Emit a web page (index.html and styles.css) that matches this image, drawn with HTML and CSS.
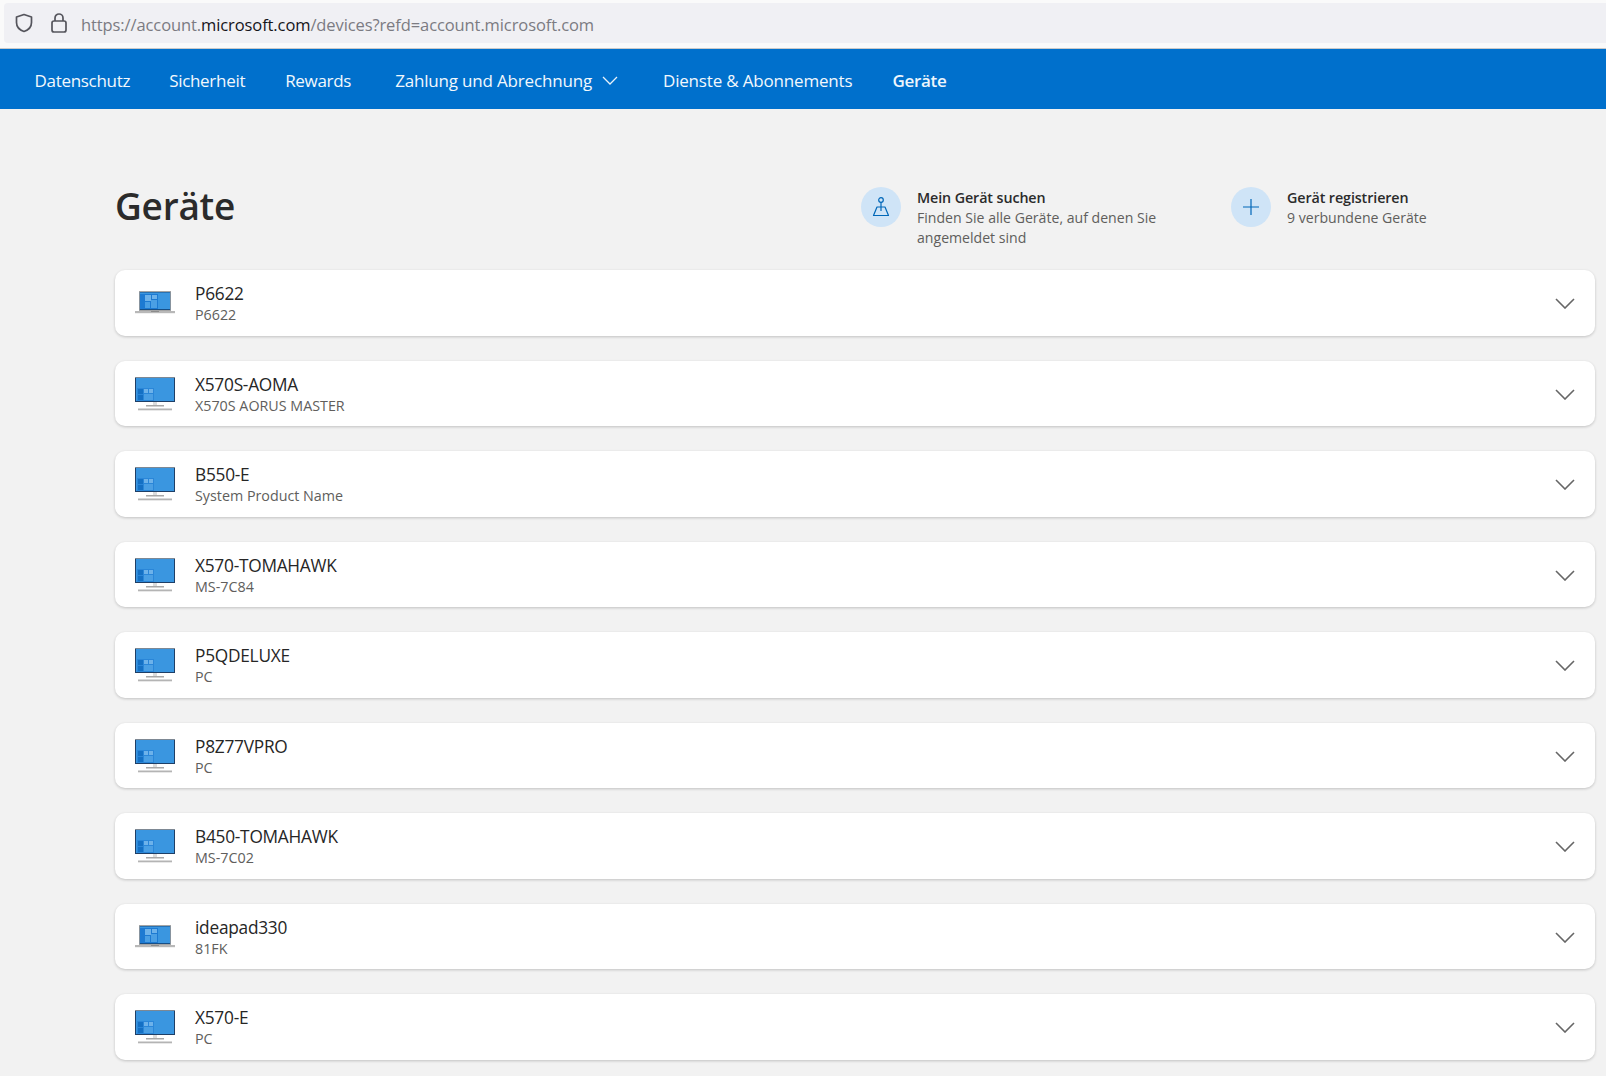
FILE: index.html
```html
<!DOCTYPE html>
<html lang="de">
<head>
<meta charset="utf-8">
<title>Geräte</title>
<link rel="stylesheet" href="styles.css">
</head>
<body>
<svg class="defs" width="0" height="0" aria-hidden="true">
  <defs>
    <symbol id="desktop" viewBox="0 0 40 34">
      <rect x="0" y="0" width="40" height="25" fill="#1f3f66"/>
      <rect x="0" y="0" width="40" height="1" fill="#7d8894"/>
      <rect x="1" y="1" width="38" height="23" fill="#3a96e0"/>
      <rect x="2" y="11" width="17" height="13" fill="#2a86d8"/>
      <rect x="3" y="12" width="5" height="5" fill="#1470c4"/><rect x="3" y="18" width="5" height="5" fill="#1470c4"/>
      <rect x="9" y="12" width="4" height="4" fill="#6db2ea"/><rect x="14" y="12" width="4" height="4" fill="#6db2ea"/>
      <rect x="9" y="17" width="9" height="6" fill="#4a9fe4"/>
      <rect x="18" y="25" width="4" height="3" fill="#dcdcdc"/>
      <rect x="11" y="28" width="18" height="1.500" fill="#a8a8a8"/>
      <rect x="3" y="31.500" width="34" height="1.800" fill="#b4b4b4"/>
    </symbol>
    <symbol id="laptop" viewBox="0 0 40 24">
      <rect x="4" y="0" width="32" height="20" fill="#a4a4a4"/>
      <rect x="4.800" y="1" width="30.400" height="18" fill="#174f86"/>
      <rect x="5" y="1.500" width="30" height="16.500" fill="#3a96e0"/>
      <rect x="5" y="3" width="18" height="15" fill="#1d7ad2"/>
      <rect x="10" y="4" width="6" height="6" fill="#6db2ea"/><rect x="17" y="4" width="5" height="4" fill="#6db2ea"/>
      <rect x="10" y="11" width="5" height="6" fill="#4a9fe4"/><rect x="16" y="9" width="6" height="8" fill="#4a9fe4"/>
      <rect x="0" y="20" width="40" height="2.200" fill="#b8b8b8"/>
      <rect x="16" y="20" width="8" height="1" fill="#8c8c8c"/>
    </symbol>
    <symbol id="chev" viewBox="0 0 20 11">
      <path d="M1 1 L10 10 L19 1" fill="none" stroke="#666" stroke-width="1.600"/>
    </symbol>
  </defs>
</svg>

<div class="browser">
  <div class="urlbar">
    <svg class="shield" width="18" height="20" viewBox="0 0 18 20"><path d="M9 1.500 L16.500 4 V9.500 C16.500 14 13.500 17 9 18.500 C4.500 17 1.500 14 1.500 9.500 V4 Z" fill="none" stroke="#55555c" stroke-width="1.700" stroke-linejoin="round"/></svg>
    <svg class="lock" width="16" height="20" viewBox="0 0 16 20"><rect x="1" y="8" width="14" height="11" rx="2" fill="none" stroke="#55555c" stroke-width="1.700"/><path d="M4 8 V5 A4 4 0 0 1 12 5 V8" fill="none" stroke="#55555c" stroke-width="1.700"/></svg>
    <span class="url">https://account.<b>microsoft.com</b>/devices?refd=account.microsoft.com</span>
  </div>
</div>

<nav class="nav">
  <a class="nav-item">Datenschutz</a>
  <a class="nav-item">Sicherheit</a>
  <a class="nav-item">Rewards</a>
  <a class="nav-item has-menu wide">Zahlung und Abrechnung
    <svg class="nav-chev" width="16" height="9" viewBox="0 0 16 9"><path d="M1 1 L8 8 L15 1" fill="none" stroke="#e8f2fb" stroke-width="1.300"/></svg>
  </a>
  <a class="nav-item wide">Dienste &amp; Abonnements</a>
  <a class="nav-item active">Geräte</a>
</nav>

<main class="main">
  <header class="head">
    <h1 class="title">Geräte</h1>
    <div class="action action-find">
      <span class="circle">
        <svg width="20" height="22" viewBox="0 0 20 22"><circle cx="10" cy="4" r="2.300" fill="none" stroke="#0067b8" stroke-width="1.200"/><path d="M10 6.300 V11 M6 11 H14 L17.500 19.500 H2.500 Z M10 11 V15" fill="none" stroke="#0067b8" stroke-width="1.200" stroke-linejoin="round"/></svg>
      </span>
      <div class="action-text">
        <div class="action-title">Mein Gerät suchen</div>
        <div class="action-sub">Finden Sie alle Geräte, auf denen Sie angemeldet sind</div>
      </div>
    </div>
    <div class="action action-add">
      <span class="circle">
        <svg width="20" height="20" viewBox="0 0 20 20"><path d="M10 2 V18 M2 10 H18" fill="none" stroke="#0067b8" stroke-width="1.200"/></svg>
      </span>
      <div class="action-text">
        <div class="action-title">Gerät registrieren</div>
        <div class="action-sub">9 verbundene Geräte</div>
      </div>
    </div>
  </header>

  <section class="list">
    <article class="card">
      <svg class="ico ico-laptop"><use href="#laptop"/></svg>
      <div class="info"><div class="name">P6622</div><div class="model">P6622</div></div>
      <svg class="chev"><use href="#chev"/></svg>
    </article>
    <article class="card">
      <svg class="ico"><use href="#desktop"/></svg>
      <div class="info"><div class="name">X570S-AOMA</div><div class="model">X570S AORUS MASTER</div></div>
      <svg class="chev"><use href="#chev"/></svg>
    </article>
    <article class="card">
      <svg class="ico"><use href="#desktop"/></svg>
      <div class="info"><div class="name">B550-E</div><div class="model">System Product Name</div></div>
      <svg class="chev"><use href="#chev"/></svg>
    </article>
    <article class="card">
      <svg class="ico"><use href="#desktop"/></svg>
      <div class="info"><div class="name">X570-TOMAHAWK</div><div class="model">MS-7C84</div></div>
      <svg class="chev"><use href="#chev"/></svg>
    </article>
    <article class="card">
      <svg class="ico"><use href="#desktop"/></svg>
      <div class="info"><div class="name">P5QDELUXE</div><div class="model">PC</div></div>
      <svg class="chev"><use href="#chev"/></svg>
    </article>
    <article class="card">
      <svg class="ico"><use href="#desktop"/></svg>
      <div class="info"><div class="name">P8Z77VPRO</div><div class="model">PC</div></div>
      <svg class="chev"><use href="#chev"/></svg>
    </article>
    <article class="card">
      <svg class="ico"><use href="#desktop"/></svg>
      <div class="info"><div class="name">B450-TOMAHAWK</div><div class="model">MS-7C02</div></div>
      <svg class="chev"><use href="#chev"/></svg>
    </article>
    <article class="card">
      <svg class="ico ico-laptop"><use href="#laptop"/></svg>
      <div class="info"><div class="name">ideapad330</div><div class="model">81FK</div></div>
      <svg class="chev"><use href="#chev"/></svg>
    </article>
    <article class="card">
      <svg class="ico"><use href="#desktop"/></svg>
      <div class="info"><div class="name">X570-E</div><div class="model">PC</div></div>
      <svg class="chev"><use href="#chev"/></svg>
    </article>
  </section>
</main>
</body>
</html>
```

FILE: styles.css
```css
* { box-sizing: border-box; }
html, body { margin: 0; height: 100%; }
body {
  height: 1076px;
  overflow: hidden;
  background: #f2f2f2;
  font-family: "Open Sans", "Liberation Sans", sans-serif;
  color: #262626;
}
.defs { position: absolute; }

.browser {
  height: 49px;
  background: #fafafa;
  padding: 3px 0 5px 4px;
  border-bottom: 1px solid #c9c9c9;
}
.urlbar {
  height: 40px;
  background: #f0f0f4;
  border-radius: 4px 0 0 4px;
  display: flex;
  align-items: center;
  padding-left: 11px;
}
.shield { margin-right: 18px; }
.lock { margin-right: 14px; }
.url {
  font-size: 16.5px;
  line-height: 22px;
  padding-top: 3px;
  color: #7b7b82;
  white-space: nowrap;
  letter-spacing: -0.1px;
}
.url b { font-weight: 400; color: #15141a; }

.nav {
  height: 60px;
  background: #0070cc;
  display: flex;
  align-items: center;
  padding: 2px 0 0 34.5px;
}
.nav-item {
  font-size: 17px;
  color: #f2f8fd;
  white-space: nowrap;
  letter-spacing: -0.3px;
}
.wide { letter-spacing: -0.18px; }
.nav-item:nth-child(1) { margin-right: 39px; }
.nav-item:nth-child(2) { margin-right: 40px; }
.nav-item:nth-child(3) { margin-right: 44px; }
.nav-item:nth-child(4) { margin-right: 45px; }
.nav-item:nth-child(5) { margin-right: 40px; }
.has-menu { display: flex; align-items: center; gap: 10px; }
.active { font-weight: 600; color: #eef6fc; }

.main { padding: 78px 11px 0 115px; }
.head { height: 83px; display: flex; align-items: flex-start; }
.title {
  margin: -1px 0 0;
  width: 746px;
  font-size: 37px;
  line-height: 40px;
  font-weight: 600;
  color: #2b2b2b;
  letter-spacing: -0.25px;
}
.action { display: flex; gap: 16px; }
.action-find { width: 370px; }
.action-add { width: 300px; }
.circle {
  flex: none;
  width: 40px;
  height: 40px;
  border-radius: 50%;
  background: #cfe4f7;
  display: flex;
  align-items: center;
  justify-content: center;
}
.action-text { width: 265px; padding-top: 1px; font-size: 14.1px; line-height: 20px; }
.action-title { font-weight: 600; font-size: 14.3px; color: #2b2b2b; letter-spacing: -0.1px; }
.action-sub { color: #605e5c; }

.list { display: flex; flex-direction: column; gap: 25px; }
.card {
  height: 65.5px;
  background: #fff;
  border-radius: 10px;
  box-shadow: 0 1px 3px rgba(0, 0, 0, 0.2);
  display: flex;
  align-items: center;
  padding: 0 20px 0 20px;
}
.ico { flex: none; width: 40px; height: 34px; margin: 1px 20px 0 0; }
.ico-laptop { height: 24px; }
.info { flex: 1; padding-top: 3px; }
.name { font-size: 17.3px; line-height: 23px; margin-top: -1px; color: #262626; letter-spacing: -0.25px; }
.model { font-size: 14.3px; line-height: 20px; color: #605e5c; }
.chev { flex: none; width: 20px; height: 11px; margin-top: 2px; }
```
